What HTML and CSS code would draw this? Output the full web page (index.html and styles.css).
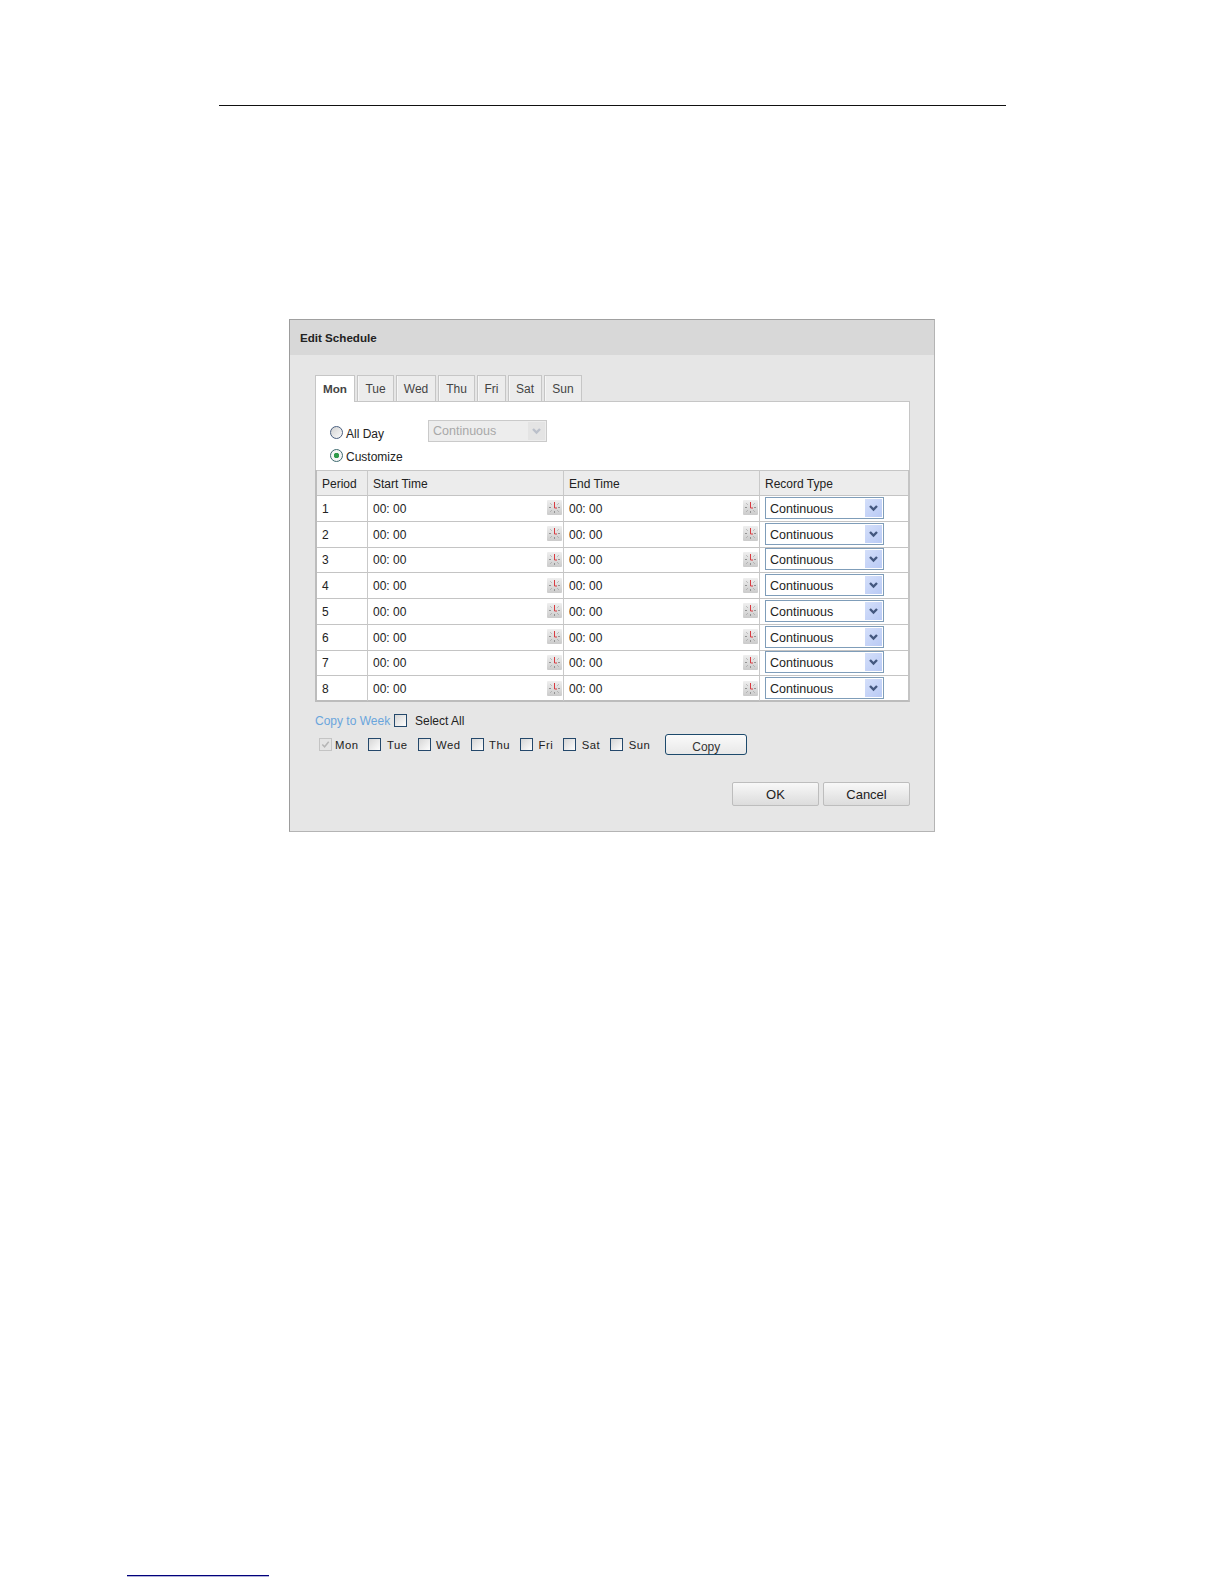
FILE: index.html
```html
<!DOCTYPE html>
<html lang="en">
<head>
<meta charset="utf-8">
<title>Edit Schedule</title>
<link rel="stylesheet" href="styles.css">
</head>
<body>
<svg class="defs" width="0" height="0" aria-hidden="true">
  <defs>
    <linearGradient id="clockbg" x1="0" y1="0" x2="0" y2="1"><stop offset="0" stop-color="#efefef"/><stop offset="1" stop-color="#cbcbcb"/></linearGradient>
    <symbol id="clock" viewBox="0 0 15 15">
      <rect x="0" y="0" width="15" height="15" rx="1" fill="url(#clockbg)"/>
      <path d="M3.500 3.500l1 1M2 7.500h2M3.500 11.500l1-1M7.500 11v2M11.500 11.500l-1-1M11 7.500h2M11.500 3.500l-1 1" stroke="#8a8a8a" stroke-width=".9" fill="none"/>
      <path d="M7.500 2v6M7.500 8h2.500" stroke="#d83a40" stroke-width="1" fill="none"/>
    </symbol>
    <symbol id="chev" viewBox="0 0 17 18">
      <path d="M5 7l3.500 3.500L12 7" stroke="#44587f" stroke-width="2.400" fill="none"/>
    </symbol>
  </defs>
</svg>

<div class="rule-top"></div>

<section class="dialog">
  <h1 class="title">Edit Schedule</h1>
  <div class="body">
    <div class="tabs">
      <span class="tab tab-active w-mon">Mon</span>
      <span class="tab w-tue">Tue</span>
      <span class="tab w-wed">Wed</span>
      <span class="tab w-thu">Thu</span>
      <span class="tab w-fri">Fri</span>
      <span class="tab w-sat">Sat</span>
      <span class="tab w-sun">Sun</span>
    </div>

    <div class="options">
      <div class="opt-row">
        <label class="opt-label"><span class="radio"></span><span class="opt-text">All Day</span></label>
        <div class="select-off"><span>Continuous</span><span class="select-off-btn"><svg class="chev-svg"><use href="#chev"/></svg></span></div>
      </div>
      <div class="opt-row opt-row-2">
        <label class="opt-label"><span class="radio radio-on"></span><span class="opt-text">Customize</span></label>
      </div>
    </div>

    <div class="grid">
      <div class="th">Period</div><div class="th">Start Time</div><div class="th">End Time</div><div class="th th-last">Record Type</div>

      <div class="td">1</div>
      <div class="td td-time"><span>00: 00</span><svg class="clock-svg"><use href="#clock"/></svg></div>
      <div class="td td-time"><span>00: 00</span><svg class="clock-svg"><use href="#clock"/></svg></div>
      <div class="td td-last"><div class="select"><span class="select-text">Continuous</span><span class="select-btn"><svg class="chev-svg"><use href="#chev"/></svg></span></div></div>

      <div class="td">2</div>
      <div class="td td-time"><span>00: 00</span><svg class="clock-svg"><use href="#clock"/></svg></div>
      <div class="td td-time"><span>00: 00</span><svg class="clock-svg"><use href="#clock"/></svg></div>
      <div class="td td-last"><div class="select"><span class="select-text">Continuous</span><span class="select-btn"><svg class="chev-svg"><use href="#chev"/></svg></span></div></div>

      <div class="td">3</div>
      <div class="td td-time"><span>00: 00</span><svg class="clock-svg"><use href="#clock"/></svg></div>
      <div class="td td-time"><span>00: 00</span><svg class="clock-svg"><use href="#clock"/></svg></div>
      <div class="td td-last"><div class="select"><span class="select-text">Continuous</span><span class="select-btn"><svg class="chev-svg"><use href="#chev"/></svg></span></div></div>

      <div class="td">4</div>
      <div class="td td-time"><span>00: 00</span><svg class="clock-svg"><use href="#clock"/></svg></div>
      <div class="td td-time"><span>00: 00</span><svg class="clock-svg"><use href="#clock"/></svg></div>
      <div class="td td-last"><div class="select"><span class="select-text">Continuous</span><span class="select-btn"><svg class="chev-svg"><use href="#chev"/></svg></span></div></div>

      <div class="td">5</div>
      <div class="td td-time"><span>00: 00</span><svg class="clock-svg"><use href="#clock"/></svg></div>
      <div class="td td-time"><span>00: 00</span><svg class="clock-svg"><use href="#clock"/></svg></div>
      <div class="td td-last"><div class="select"><span class="select-text">Continuous</span><span class="select-btn"><svg class="chev-svg"><use href="#chev"/></svg></span></div></div>

      <div class="td">6</div>
      <div class="td td-time"><span>00: 00</span><svg class="clock-svg"><use href="#clock"/></svg></div>
      <div class="td td-time"><span>00: 00</span><svg class="clock-svg"><use href="#clock"/></svg></div>
      <div class="td td-last"><div class="select"><span class="select-text">Continuous</span><span class="select-btn"><svg class="chev-svg"><use href="#chev"/></svg></span></div></div>

      <div class="td">7</div>
      <div class="td td-time"><span>00: 00</span><svg class="clock-svg"><use href="#clock"/></svg></div>
      <div class="td td-time"><span>00: 00</span><svg class="clock-svg"><use href="#clock"/></svg></div>
      <div class="td td-last"><div class="select"><span class="select-text">Continuous</span><span class="select-btn"><svg class="chev-svg"><use href="#chev"/></svg></span></div></div>

      <div class="td">8</div>
      <div class="td td-time"><span>00: 00</span><svg class="clock-svg"><use href="#clock"/></svg></div>
      <div class="td td-time"><span>00: 00</span><svg class="clock-svg"><use href="#clock"/></svg></div>
      <div class="td td-last"><div class="select"><span class="select-text">Continuous</span><span class="select-btn"><svg class="chev-svg"><use href="#chev"/></svg></span></div></div>
    </div>

    <div class="copy-row">
      <span class="copy-label">Copy to Week</span>
      <span class="cb"></span>
      <span class="select-all">Select All</span>
    </div>

    <div class="day-row">
      <span class="cb cb-off"><svg class="tick" viewBox="0 0 12 12"><path d="M2.500 6l2.500 2.500 4.500-5.500" stroke="#b5b5b5" stroke-width="1.600" fill="none"/></svg></span><span class="day day-first">Mon</span>
      <span class="cb"></span><span class="day">Tue</span>
      <span class="cb"></span><span class="day">Wed</span>
      <span class="cb"></span><span class="day">Thu</span>
      <span class="cb"></span><span class="day">Fri</span>
      <span class="cb"></span><span class="day">Sat</span>
      <span class="cb"></span><span class="day">Sun</span>
      <span class="btn-copy">Copy</span>
    </div>

    <div class="actions">
      <span class="btn">OK</span>
      <span class="btn">Cancel</span>
    </div>
  </div>
</section>

<div class="rule-foot"></div>
</body>
</html>
```

FILE: styles.css
```css
* { box-sizing: border-box; }

html, body { margin: 0; padding: 0; background: #fff; }

body {
  font-family: "Liberation Sans", Arial, sans-serif;
  font-size: 12px;
  color: #222;
  overflow: hidden;
  height: 1584px;
}

.defs { position: absolute; }

.rule-top {
  height: 1px;
  width: 787px;
  margin: 105px 0 0 219px;
  background: #111;
}

.rule-foot {
  height: 1px;
  width: 142px;
  margin: 743px 0 0 127px;
  background: #00007c;
  box-shadow: 0 1px 0 rgba(0, 0, 124, .3);
}

.dialog {
  width: 646px;
  height: 513px;
  margin: 213px 0 0 289px;
  border: 1px solid #b4b4b4;
  border-top-color: #a0a0a0;
  border-left-color: #9c9c9c;
  background: #e6e6e6;
}

.title {
  margin: 0;
  height: 35px;
  line-height: 35px;
  padding-left: 10px;
  background: #d8d8d8;
  font-size: 11.6px;
  font-weight: bold;
  color: #222;
}

.body { padding: 20px 24px 0 25px; }

.tabs {
  display: flex;
  height: 26px;
  gap: 2px;
}

.tab {
  height: 26px;
  border: 1px solid #c6c6c6;
  border-bottom: 0;
  background: #ececec;
  box-shadow: inset 1px 0 0 #f6f6f6;
  text-align: center;
  line-height: 26px;
  color: #444;
}

.tab-active {
  height: 27px;
  background: #fff;
  font-weight: bold;
  font-size: 11.7px;
  position: relative;
  z-index: 1;
  box-shadow: none;
}

.w-mon { width: 40px; }
.w-tue { width: 37px; }
.w-wed { width: 40px; }
.w-thu { width: 37px; }
.w-fri { width: 29px; }
.w-sat { width: 34px; }
.w-sun { width: 38px; }

.options {
  height: 69px;
  padding: 18px 0 0 14px;
  background: #fff;
  border: 1px solid #c6c6c6;
  border-bottom: 0;
}

.opt-row { display: flex; align-items: center; height: 22px; }
.opt-row-2 { margin-top: 3px; }

.opt-label {
  width: 98px;
  display: flex;
  align-items: center;
  gap: 3px;
  color: #222;
  position: relative;
  top: 1px;
}

.opt-row-2 .opt-label { top: -1px; }

.opt-text { margin-top: 4px; }

.radio {
  width: 13px;
  height: 13px;
  flex: none;
  border-radius: 50%;
  border: 1px solid #4a5f80;
  background: linear-gradient(135deg, #d2d2d2, #fbfbfb);
}

.radio-on {
  border-color: #3f6b70;
  background: radial-gradient(circle, #2f9a4a 0 2.500px, #f5f5f5 3px);
}

.select-off {
  width: 119px;
  height: 22px;
  display: flex;
  align-items: center;
  justify-content: space-between;
  padding: 0 1px 0 4px;
  border: 1px solid #cacaca;
  background: #ededed;
  color: #a8a8a8;
  font-size: 12.500px;
}

.select-off-btn {
  width: 17px;
  height: 18px;
  background: #e4e4e4;
}

.select-off-btn .chev-svg { opacity: .25; }

.grid {
  height: 232px;
  display: grid;
  grid-template-columns: 51px 196px 196px 1fr;
  grid-template-rows: 25px repeat(8, 25.750px);
  border-left: 2px solid #bcbcbc;
  border-right: 2px solid #c4c4c4;
  border-bottom: 2px solid #bcbcbc;
  background: #fff;
}

.th, .td {
  display: flex;
  align-items: center;
  border-top: 1px solid #c4c4c4;
  border-right: 1px solid #c9c9c9;
  padding-left: 5px;
}

.th { background: #ececec; border-top-color: #c6c6c6; padding-top: 1px; }
.th-last, .td-last { border-right: 0; }

.td { color: #222; padding-top: 1px; }

.td-time {
  justify-content: space-between;
  padding-right: 1px;
}

.clock-svg { width: 15px; height: 15px; flex: none; position: relative; top: -1px; }

.select {
  width: 119px;
  height: 22px;
  display: flex;
  align-items: center;
  justify-content: space-between;
  padding: 0 1px 0 4px;
  border: 1px solid #7f9db9;
  background: #fff;
  font-size: 12.500px;
  color: #222;
  position: relative;
  top: -1px;
}

.select-text { padding-top: 2px; }

.select-btn {
  width: 17px;
  height: 18px;
  background: linear-gradient(135deg, #d4dffa, #b9caf5);
}

.chev-svg { width: 17px; height: 18px; display: block; }

.copy-row {
  display: flex;
  align-items: center;
  height: 18px;
  margin-top: 10px;
}

.copy-label { color: #6aa5dc; width: 79px; }

.select-all { margin-left: 8px; color: #222; }

.cb {
  width: 13px;
  height: 13px;
  flex: none;
  border: 1px solid #24486b;
  background: linear-gradient(135deg, #d6d6d6, #fdfdfd);
}

.copy-row .cb { position: relative; top: -1px; }

.cb-off {
  width: 13px;
  border-color: #c4c4c4;
  background: #e4e4e4;
  margin-left: 4px;
}

.tick { width: 11px; height: 11px; display: block; }

.day-row {
  display: flex;
  align-items: center;
  height: 21px;
  margin-top: 4px;
}

.day {
  font-size: 11.300px;
  letter-spacing: .5px;
  margin: 1px 10px 0 5.500px;
  color: #222;
}

.day-first { margin-left: 3px; }

.btn-copy {
  width: 82px;
  height: 21px;
  margin-left: 5px;
  padding-top: 4px;
  display: flex;
  align-items: center;
  justify-content: center;
  border: 1px solid #1d4a6c;
  border-radius: 3px;
  background: linear-gradient(#fafafa, #e8e8e8);
  color: #333;
}

.actions {
  display: flex;
  justify-content: flex-end;
  gap: 4px;
  margin-top: 27px;
}

.btn {
  width: 87px;
  height: 24px;
  display: flex;
  align-items: center;
  justify-content: center;
  border: 1px solid #bdbdbd;
  border-radius: 2px;
  background: linear-gradient(#f8f8f8, #dcdcdc);
  font-size: 13px;
  color: #222;
}
```
